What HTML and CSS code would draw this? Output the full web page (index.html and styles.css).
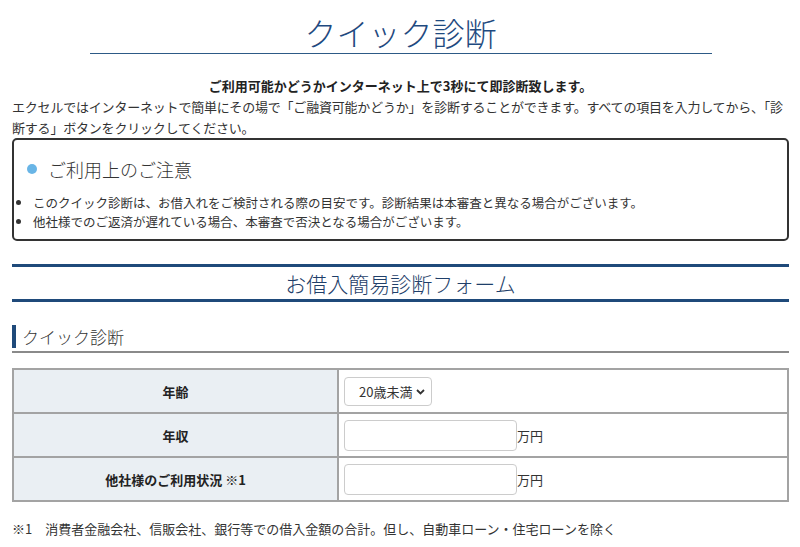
FILE: index.html
```html
<!DOCTYPE html>
<html lang="ja">
  <head>
    <meta charset="UTF-8">
    <meta name="viewport" content="width=device-width, initial-scale=1.0">
    <title>クイック診断</title>
    <link rel="stylesheet" href="styles.css">
  </head>

  <body>
    <div class="page">
      <h1 class="page-title">クイック診断</h1>

      <p class="lead">ご利用可能かどうかインターネット上で3秒にて即診断致します。</p>
      <p class="intro">エクセルではインターネットで簡単にその場で「ご融資可能かどうか」を診断することができます。すべての項目を入力してから、「診断する」ボタンをクリックしてください。</p>

      <div class="notice">
        <h2 class="notice-title"><span class="dot"></span>ご利用上のご注意</h2>
        <ul class="notice-list">
          <li>このクイック診断は、お借入れをご検討される際の目安です。診断結果は本審査と異なる場合がございます。</li>
          <li>他社様でのご返済が遅れている場合、本審査で否決となる場合がございます。</li>
        </ul>
      </div>

      <h2 class="form-title">お借入簡易診断フォーム</h2>

      <h3 class="section-title"><span>クイック診断</span></h3>

      <table class="form-table">
        <tr>
          <th>年齢</th>
          <td>
            <div class="select-wrap">
              <select class="age-select">
                <option>20歳未満</option>
                <option>20歳～29歳</option>
                <option>30歳～39歳</option>
              </select>
              <svg class="chevron" width="9" height="6" viewBox="0 0 9 6"><path d="M1 1 L4.5 4.5 L8 1" fill="none" stroke="#333" stroke-width="1.8"/></svg>
            </div>
          </td>
        </tr>
        <tr>
          <th>年収</th>
          <td><input type="text" class="amount"><span class="unit">万円</span></td>
        </tr>
        <tr>
          <th>他社様のご利用状況 ※1</th>
          <td><input type="text" class="amount"><span class="unit">万円</span></td>
        </tr>
      </table>

      <p class="footnote">※1　消費者金融会社、信販会社、銀行等での借入金額の合計。但し、自動車ローン・住宅ローンを除く</p>
    </div>
  </body>
</html>
```

FILE: styles.css
```css
body {
  margin: 0;
  font-family: "Noto Sans CJK JP", "Noto Sans", sans-serif;
  font-size: 13px;
  color: #333;
  background-color: #fff;
}

.page {
  padding: 0 11px 0 12px;
}

.page-title {
  width: 622px;
  margin: 0 auto;
  padding-top: 11px;
  font-size: 32px;
  font-weight: 300;
  line-height: 42px;
  text-align: center;
  color: #1f4a80;
  border-bottom: 1px solid #2d5a86;
}

.lead {
  margin: 21px 0 0;
  font-weight: bold;
  text-align: center;
  line-height: 21px;
  color: #222;
}

.intro {
  margin: 0;
  line-height: 21px;
  letter-spacing: -0.2px;
}

.notice {
  margin-top: 0;
  border: 2px solid #333;
  border-radius: 5px;
  padding: 16px 10px 8px 8px;
}

.notice-title {
  display: flex;
  align-items: center;
  margin: 0 0 11px;
  font-size: 18px;
  font-weight: 300;
  line-height: 26px;
  color: #333;
}

.dot {
  width: 10px;
  height: 10px;
  border-radius: 50%;
  background-color: #69b5e6;
  margin: 0 11px 0 5px;
}

.notice-list {
  margin: 0;
  padding-left: 11px;
  line-height: 19px;
  font-size: 12.5px;
}

.form-title {
  margin: 23px 0 0;
  border-top: 3px solid #1f4a7a;
  border-bottom: 3px solid #1f4a7a;
  font-size: 21px;
  font-weight: 300;
  line-height: 32px;
  text-align: center;
  color: #1f3f6a;
}

.section-title {
  margin: 23px 0 0;
  padding-bottom: 3px;
  border-bottom: 2px solid #8a8a8a;
  font-size: 17px;
  font-weight: 300;
  line-height: 23px;
}

.section-title span {
  display: block;
  border-left: 4px solid #1f4a7a;
  padding-left: 6px;
}

.form-table {
  width: 100%;
  margin-top: 15px;
  border-collapse: collapse;
}

.form-table th,
.form-table td {
  height: 40px;
  border: 2px solid #a3a3a3;
}

.form-table th {
  width: 321px;
  background-color: #eaeff3;
  font-weight: bold;
  text-align: center;
  color: #222;
}

.form-table td {
  padding: 0 0 0 5px;
}

.select-wrap {
  position: relative;
  display: inline-block;
  vertical-align: middle;
}

.age-select {
  appearance: none;
  width: 88px;
  height: 29px;
  padding: 0 0 0 14px;
  border: 1px solid #ccc;
  border-radius: 4px;
  background-color: #fff;
  font-family: inherit;
  font-size: 13px;
  color: #333;
}

.chevron {
  position: absolute;
  right: 7px;
  top: 12px;
  pointer-events: none;
}

.amount {
  width: 173px;
  height: 31px;
  box-sizing: border-box;
  border: 1px solid #ccc;
  border-radius: 4px;
  vertical-align: middle;
}

.unit {
  vertical-align: middle;
}

.footnote {
  margin: 16px 0 0;
  line-height: 21px;
}
```
